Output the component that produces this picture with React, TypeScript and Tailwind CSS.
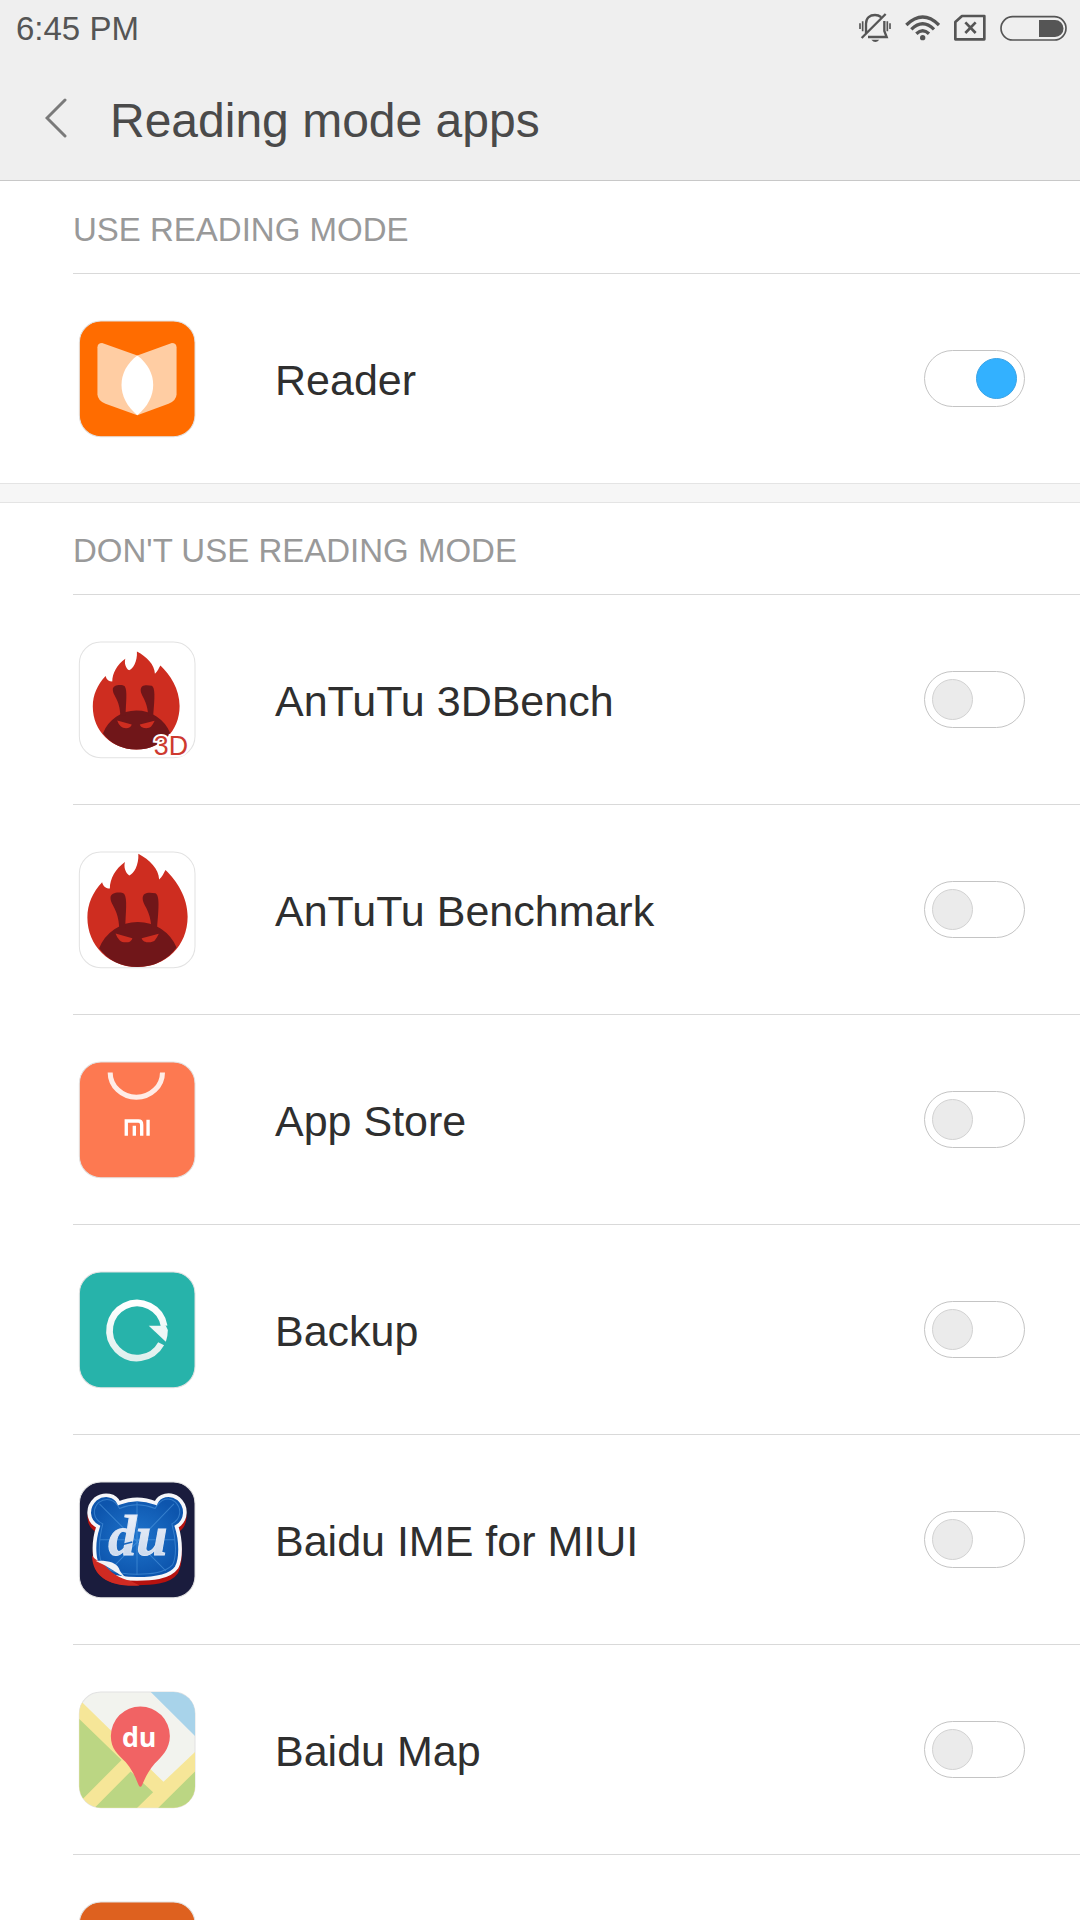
import { useState } from "react";
import type { ReactNode } from "react";

type AppItem = {
    id: string;
    name: string;
    icon: ReactNode;
};

function Tile({ fill, children }: { fill: string; children?: ReactNode }) {
    return (
        <svg viewBox="59 65 346 346" className="h-[116px] w-[116px] shrink-0 overflow-visible" aria-hidden="true">
            <rect x="60" y="65" width="345" height="345" rx="64" fill={fill} stroke="#e2e2e2" strokeWidth="3" />
            {children}
        </svg>
    );
}

function AntutuFace() {
    return (
        <>
            <path
                d="M128 155C100 185 84 220 84 260C84 345 150 408 234 408C318 408 383 345 383 258C383 200 350 150 317 119C311 128 308 140 298 147C297 115 270 88 236 70C238 105 222 130 209 135C197 127 192 110 196 95C168 115 151 145 151 174C140 174 131 168 128 155Z"
                fill="#ce2d20"
            />
            <g fill="#701619">
                <path d="M119 352A125 125 0 0 1 350 350C325 385 285 408 234 408C185 408 145 388 119 352Z" />
                <path d="M153 202C152 184 185 183 194 190C204 205 198 245 197 290L179 290C177 236 153 222 153 202Z" />
                <path d="M249 205C248 184 268 185 287 188C299 194 298 225 292 290L275 290C272 238 250 224 249 205Z" />
            </g>
            <g fill="#ce2d20">
                <path d="M168 308L218 322C216 337 190 338 180 328Q172 320 168 308Z" />
                <path d="M297 309L246 322C248 336 275 338 285 329Q292 320 297 309Z" />
            </g>
        </>
    );
}

const readerIcon = (
    <Tile fill="#ff6c00">
        <g fill="#ffcda3">
            <path d="M114 143Q115 130 130 131L233 168V346L138 312Q115 302 114 284Z" />
            <path d="M350 143Q349 130 334 131L233 168V346L326 312Q349 302 350 284Z" />
        </g>
        <path d="M233 168C170 215 170 295 233 346C296 295 296 215 233 168Z" fill="#fff" />
    </Tile>
);

const antutu3dIcon = (
    <Tile fill="#fff">
        <g transform="translate(27.4 32.4) scale(.866)">
            <AntutuFace />
        </g>
        <text
            x="282"
            y="403"
            fontSize="80"
            fontFamily="Liberation Sans, sans-serif"
            fill="#ce3a30"
            stroke="#fff"
            strokeWidth="12"
            paintOrder="stroke"
        >
            3D
        </text>
    </Tile>
);

const antutuIcon = (
    <Tile fill="#fff">
        <AntutuFace />
    </Tile>
);

const storeIcon = (
    <Tile fill="#fd7951">
        <path d="M152 96A78 74 0 0 0 308 96" fill="none" stroke="#ffece6" strokeWidth="15" />
        <path d="M200 285V241H236Q246 241 246 252V285M224 285V255M265 237V285" fill="none" stroke="#fff" strokeWidth="10" />
    </Tile>
);

const backupIcon = (
    <Tile fill="#27b3aa">
        <defs>
            <linearGradient id="backup-ring" x1="0" y1="0" x2="0" y2="1">
                <stop offset="0" stopColor="#ffffff" />
                <stop offset="1" stopColor="#e0f0ee" />
            </linearGradient>
        </defs>
        <path d="M304 279A82 82 0 1 1 313 226" fill="none" stroke="url(#backup-ring)" strokeWidth="20" />
        <path d="M267 225H318L324 238Q324 256 318 273Z" fill="#eef7f6" />
    </Tile>
);

const BEAR =
    "M178 128Q232 106 288 128C298 104 330 96 355 114C383 138 381 180 350 198C364 240 364 295 350 320C328 352 270 354 232 354C180 354 110 350 106 280C103 250 107 225 116 198C82 180 82 140 108 116C135 96 168 104 178 128Z";

const imeIcon = (
    <Tile fill="#1a1c3d">
        <defs>
            <radialGradient id="ime-blue">
                <stop offset="0" stopColor="#1f74cc" />
                <stop offset="1" stopColor="#0d55ad" />
            </radialGradient>
            <linearGradient id="ime-text" x1="0" y1="0" x2="0" y2="1">
                <stop offset="0" stopColor="#f4f6fb" />
                <stop offset="1" stopColor="#c3d3ea" />
            </linearGradient>
        </defs>
        <path d={BEAR} transform="translate(0 14)" fill="#b5120f" stroke="#b5120f" strokeWidth="10" />
        <path d={BEAR} fill="url(#ime-blue)" stroke="#f6f7fa" strokeWidth="11" />
        <g fill="none" stroke="#5aa3e6" strokeWidth="3" opacity=".5">
            <path d="M232 122V342M122 237H345M120 130L318 330M342 130L150 330" />
            <path d="M180 144Q232 122 286 144C304 112 330 110 346 124C368 146 362 176 336 190C350 240 350 290 338 312C312 338 270 340 232 340C175 340 122 330 120 280C118 245 122 220 130 190C100 176 98 146 118 126C140 110 166 116 180 144Z" />
        </g>
        <path d="M98 284Q108 300 128 304C150 334 180 352 215 361L240 374C150 380 98 345 98 284Z" fill="#cf2a22" />
        <path d="M108 300C145 298 170 305 178 322C184 340 200 352 218 360C190 352 165 326 108 300Z" fill="#f1f2f6" />
        <text
            x="146"
            y="283"
            fontSize="168"
            fontWeight="700"
            fontStyle="italic"
            fontFamily="Liberation Serif, serif"
            fill="url(#ime-text)"
            stroke="#dfe7f4"
            strokeWidth="3"
        >
            du
        </text>
        <path d="M186 252L218 244" stroke="#1765bd" strokeWidth="5" />
    </Tile>
);

const mapIcon = (
    <Tile fill="#f2f3ee">
        <defs>
            <clipPath id="map-tile">
                <rect x="60" y="65" width="345" height="345" rx="64" />
            </clipPath>
        </defs>
        <g clipPath="url(#map-tile)">
            <path d="M271 63H407V198Z" fill="#a8d3ea" />
            <path d="M58 86L311 333L407 242V412H58Z" fill="#f6e698" />
            <path d="M58 144L186 268L58 396ZM105 411L213 302L280 364L232 411ZM295 411L407 300V411Z" fill="#bbd683" />
        </g>
        <path
            d="M154 196A88 88 0 0 1 330 196C330 235 305 258 285 278C265 300 255 325 247 343Q242 352 237 343C228 322 220 300 198 274C175 250 154 235 154 196Z"
            fill="#f16364"
        />
        <text x="187" y="229" fontSize="80" fontWeight="700" fontFamily="Open Sans, sans-serif" fill="#fff">
            du
        </text>
    </Tile>
);

const readingApps: AppItem[] = [{ id: "reader", name: "Reader", icon: readerIcon }];

const otherApps: AppItem[] = [
    { id: "antutu-3d", name: "AnTuTu 3DBench", icon: antutu3dIcon },
    { id: "antutu", name: "AnTuTu Benchmark", icon: antutuIcon },
    { id: "store", name: "App Store", icon: storeIcon },
    { id: "backup", name: "Backup", icon: backupIcon },
    { id: "ime", name: "Baidu IME for MIUI", icon: imeIcon },
    { id: "map", name: "Baidu Map", icon: mapIcon },
];

function StatusIcons() {
    return (
        <div className="flex items-center gap-[14px] text-[#555555]" aria-hidden="true">
            <svg viewBox="57 36 96 90" className="h-[30px] w-[32px]" fill="none" stroke="currentColor" strokeWidth="7">
                <path d="M78 98V68C78 50 90 42 105 42C112 42 118 44 123 48M133 60V90L140 108H84M65 111L137 39" />
                <path d="M68 61V91M60 67V84M142 61V91M150 67V84" strokeWidth="5" />
                <path d="M94 116H118Q106 130 94 116Z" fill="currentColor" stroke="none" />
            </svg>
            <svg viewBox="197 36 105 90" className="h-[30px] w-[35px]" fill="none" stroke="currentColor" strokeWidth="10">
                <path d="M201 72Q250 24 299 72M216 85Q250 52 284 85M231 98Q250 80 269 98" />
                <circle cx="250" cy="110" r="8" fill="currentColor" stroke="none" />
            </svg>
            <svg viewBox="348 36 96 90" className="h-[30px] w-[32px]" fill="none" stroke="currentColor" strokeWidth="8">
                <path d="M352 63L372 45H439V115H352Z" strokeLinejoin="round" />
                <path d="M382 64L413 96M413 64L382 96" />
            </svg>
            <svg viewBox="480 36 201 90" className="h-[30px] w-[67px]" fill="none" stroke="currentColor" strokeWidth="5">
                <rect x="483" y="47" width="195" height="70" rx="35" />
                <path d="M597 57H645A25 25 0 0 1 645 108H597Z" fill="currentColor" stroke="none" />
            </svg>
        </div>
    );
}

function SectionTitle({ children }: { children: ReactNode }) {
    return (
        <h2 className="ml-[73px] flex h-[93px] items-center border-b border-[#d9d9d9] pt-1.5 text-[33px] leading-10 text-[#999999]">
            {children}
        </h2>
    );
}

export default function App() {
    const [enabled, setEnabled] = useState<Record<string, boolean>>({ reader: true });

    const toggle = (id: string) => {
        setEnabled(prev => ({ ...prev, [id]: !prev[id] }));
    };

    const renderRow = (app: AppItem) => (
        <li key={app.id} className="ml-[73px] flex h-[210px] items-center border-b border-[#d9d9d9] pl-[6px] pr-[55px]">
            {app.icon}
            <label htmlFor={app.id} className="ml-20 flex-1 pt-0.5 text-[43px] leading-[52px] text-[#2f2f2f]">
                {app.name}
            </label>
            <input
                id={app.id}
                type="checkbox"
                role="switch"
                checked={!!enabled[app.id]}
                onChange={() => toggle(app.id)}
                className="flex h-[57px] w-[101px] shrink-0 cursor-pointer appearance-none items-center rounded-full border border-[#c4c4c4] bg-white px-[7px] before:h-[41px] before:w-[41px] before:rounded-full before:border before:border-[#d2d2d2] before:bg-[#ebebeb] before:content-[''] checked:justify-end checked:before:border-[#3ba4e6] checked:before:bg-[#33b1ff]"
            />
        </li>
    );

    return (
        <div className="flex h-screen flex-col bg-white font-['Liberation_Sans',Arial,sans-serif]">
            <header className="shrink-0 border-b border-[#c8c8c8] bg-[#efefef]">
                <div className="flex h-[56px] items-center justify-between pl-4 pr-[13px]">
                    <span className="pt-0.5 text-[33px] leading-10 text-[#555555]">6:45 PM</span>
                    <StatusIcons />
                </div>
                <div className="flex h-[124px] items-center pl-[36px]">
                    <button type="button" aria-label="Back" className="flex h-[60px] w-[40px] cursor-pointer items-center justify-center">
                        <svg viewBox="0 0 22 40" className="h-[40px] w-[22px]" fill="none" stroke="#7a7a7a" strokeWidth="3" strokeLinecap="round">
                            <path d="M20 2L2 20L20 38" />
                        </svg>
                    </button>
                    <h1 className="ml-[34px] pt-1.5 text-[48px] leading-[56px] text-[#4a4a4a]">Reading mode apps</h1>
                </div>
            </header>

            <main className="flex-1 overflow-y-auto [scrollbar-width:none]">
                <section>
                    <SectionTitle>USE READING MODE</SectionTitle>
                    <ul>{readingApps.map(renderRow)}</ul>
                </section>

                <div className="relative -my-px h-5 border-y border-[#e4e4e4] bg-[#f6f6f6]" />

                <section>
                    <SectionTitle>DON'T USE READING MODE</SectionTitle>
                    <ul>
                        {otherApps.map(renderRow)}
                        <li className="ml-[73px] flex h-[210px] items-center pl-[6px]">
                            <Tile fill="#de611f" />
                        </li>
                    </ul>
                </section>
            </main>
        </div>
    );
}
